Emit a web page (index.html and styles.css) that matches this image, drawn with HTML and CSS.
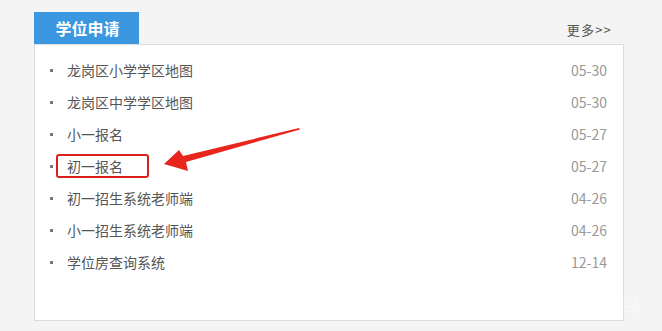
FILE: index.html
```html
<!DOCTYPE html>
<html lang="zh-CN">
<head>
<meta charset="utf-8">
<title>学位申请</title>
<link rel="stylesheet" href="styles.css">
</head>
<body>
<div class="panel">
  <div class="panel-head">
    <div class="tab">学位申请</div>
    <a class="more" href="#">更多&gt;&gt;</a>
  </div>
  <div class="panel-body">
    <ul class="list">
      <li><span class="dot"></span><span class="title">龙岗区小学学区地图</span><span class="date">05-30</span></li>
      <li><span class="dot"></span><span class="title">龙岗区中学学区地图</span><span class="date">05-30</span></li>
      <li><span class="dot"></span><span class="title">小一报名</span><span class="date">05-27</span></li>
      <li><span class="dot"></span><span class="title marked">初一报名</span><span class="date">05-27</span></li>
      <li><span class="dot"></span><span class="title">初一招生系统老师端</span><span class="date">04-26</span></li>
      <li><span class="dot"></span><span class="title">小一招生系统老师端</span><span class="date">04-26</span></li>
      <li><span class="dot"></span><span class="title">学位房查询系统</span><span class="date">12-14</span></li>
    </ul>
    <svg class="arrow" width="150" height="50" viewBox="0 0 150 50">
      <path d="M135 2 L136 3.5 L22 36 L24 45 L0 38 L15 24 L19 30 Z" fill="#e8261d"/>
    </svg>
  </div>
</div>
<div class="watermark">斑马</div>
</body>
</html>
```
FILE: styles.css
```css
html, body {
  margin: 0;
  padding: 0;
}
body {
  background: #f4f4f4;
  width: 662px;
  height: 331px;
  overflow: hidden;
  font-family: "Noto Sans CJK SC", "Microsoft YaHei", sans-serif;
  position: relative;
}
.panel {
  margin: 12px 0 0 34px;
  width: 590px;
}
.panel-head {
  display: flex;
  justify-content: space-between;
  align-items: center;
  height: 32px;
}
.tab {
  width: 105px;
  height: 32px;
  background: #3a97e0;
  color: #fff;
  font-size: 16px;
  font-weight: bold;
  line-height: 32px;
  text-align: center;
  box-sizing: border-box;
  padding-left: 2px;
}
.more {
  color: #555;
  font-size: 13px;
  text-decoration: none;
  margin-right: 12px;
  margin-top: 2px;
  letter-spacing: 1.2px;
}
.panel-body {
  position: relative;
  background: #fff;
  border: 1px solid #dcdcdc;
  height: 275px;
}
.list {
  list-style: none;
  margin: 0;
  padding: 9px 16px 0 15px;
}
.list li {
  display: flex;
  align-items: center;
  height: 32px;
  font-size: 14px;
  color: #555;
}
.dot {
  width: 3px;
  height: 3px;
  background: #777;
  margin-right: 14px;
  flex: none;
}
.title {
  flex: 1;
  line-height: 20px;
}
.title.marked {
  position: relative;
}
.title.marked::before {
  content: "";
  position: absolute;
  left: -11px;
  top: -2px;
  width: 89px;
  height: 20px;
  border: 2px solid #d9221c;
  border-radius: 3px;
  pointer-events: none;
}
.date {
  color: #999;
  font-size: 14px;
}
.arrow {
  position: absolute;
  left: 129px;
  top: 81px;
}
.watermark {
  position: absolute;
  left: 598px;
  top: 288px;
  font-size: 22px;
  font-weight: bold;
  color: rgba(255, 255, 255, 0.3);
}
```
